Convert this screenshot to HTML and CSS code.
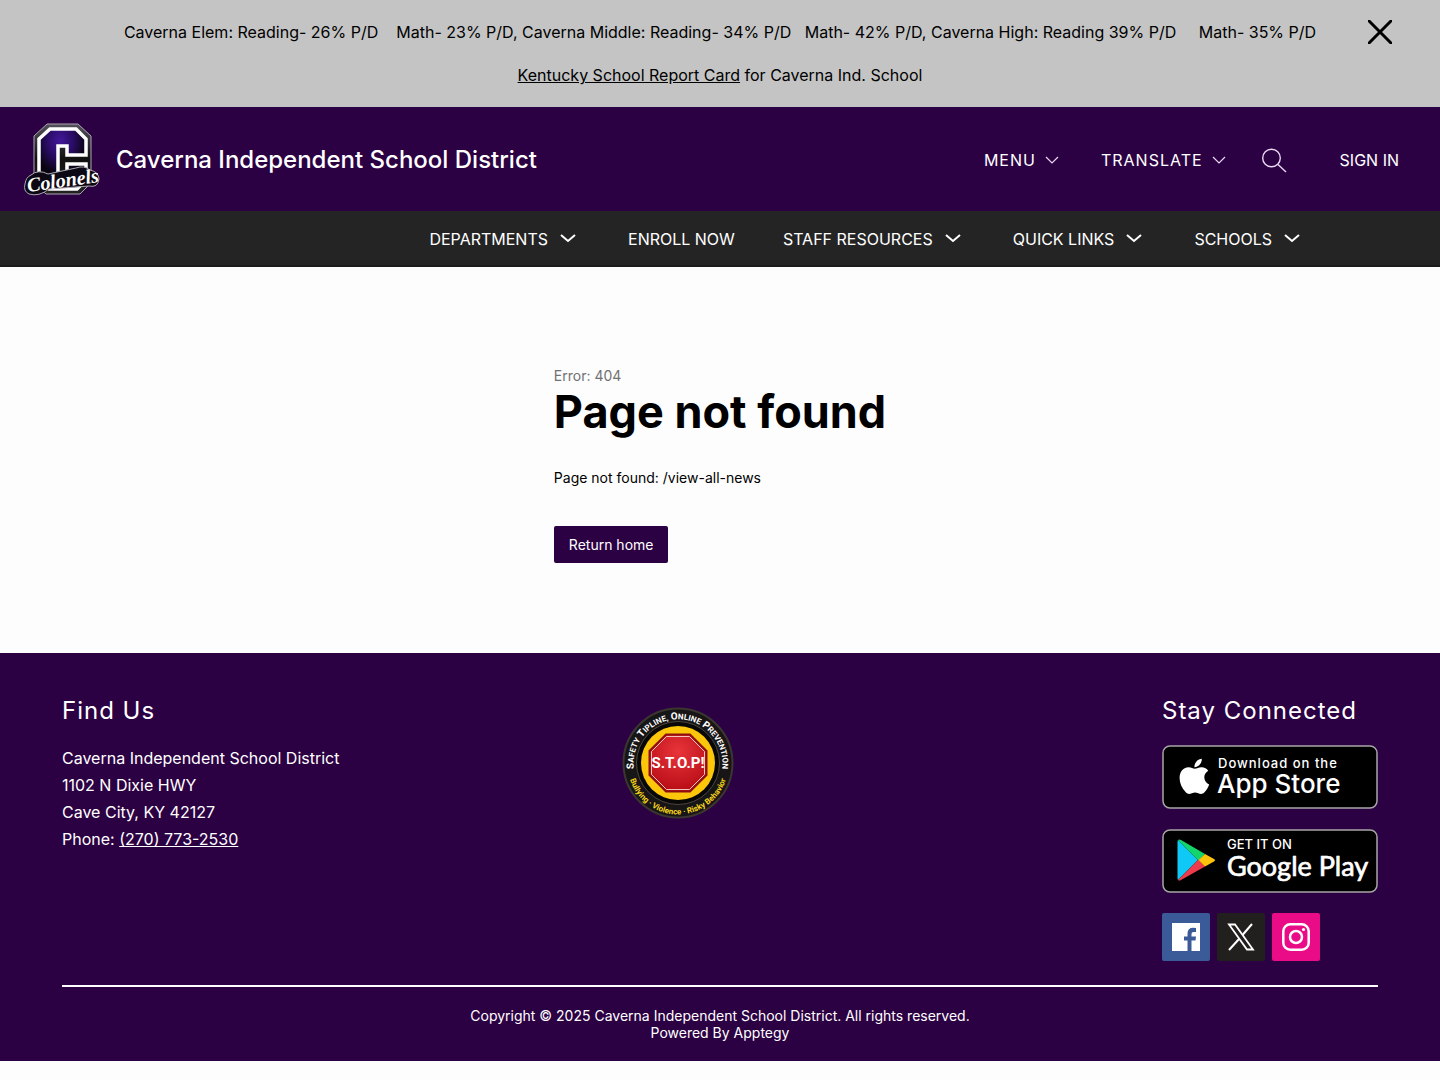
FILE: index.html
```html
<!DOCTYPE html>
<html lang="en">
<head>
<meta charset="utf-8">
<meta name="viewport" content="width=device-width, initial-scale=1">
<title>Caverna Independent School District</title>
<link rel="stylesheet" href="styles.css">
</head>
<body>
<section class="alert" aria-label="Announcement">
  <div class="alert-text">
    <p>Caverna Elem: Reading- 26% P/D&nbsp;&nbsp;&nbsp; Math- 23% P/D, Caverna Middle: Reading- 34% P/D&nbsp;&nbsp; Math- 42% P/D, Caverna High: Reading 39% P/D&nbsp;&nbsp;&nbsp;&nbsp; Math- 35% P/D</p>
    <p><a href="#">Kentucky School Report Card</a> for Caverna Ind. School</p>
  </div>
  <button class="alert-close" type="button" aria-label="Close announcement">
    <svg width="24" height="24" viewBox="0 0 24 24" fill="none" stroke="#000" stroke-width="3" stroke-linecap="round"><path d="M1 1 23 23M23 1 1 23"/></svg>
  </button>
</section>

<header class="header">
  <a class="brand" href="#">
    <svg class="logo" width="76" height="74" viewBox="0 0 76 74" role="img" aria-label="Colonels logo">
      <defs>
        <radialGradient id="letter" cx="45%" cy="20%" r="55%">
          <stop offset="0" stop-color="#42189a"/><stop offset="0.5" stop-color="#2a0c66"/><stop offset="1" stop-color="#09040f"/>
        </radialGradient>
        <linearGradient id="rim" x1="0" y1="0" x2="0" y2="1">
          <stop offset="0" stop-color="#54515c"/><stop offset="0.5" stop-color="#111"/><stop offset="1" stop-color="#222"/>
        </linearGradient>
      </defs>
      <path d="M23 1H54L67 13V60L56 71H22L10 60V13Z" fill="url(#rim)" stroke="#aaa6b0"/>
      <path d="M26 6H52L62 16V32H43V23H34V50H43V41H62V57L53 66H25L15 57V16Z" fill="url(#letter)" stroke="#fff" stroke-width="3.500"/>
      <path d="M7 52Q14 46 24 51L52 45Q60 42 66 47Q75 49 75 56Q74 65 65 63L25 66Q15 74 5 71Q-1 68 1 61Q2 54 7 52Z" fill="#0d0914" stroke="#aaa6b0"/>
      <text class="logo-script" x="4" y="69" transform="rotate(-8 4 69)">Colonels</text>
    </svg>
    <span class="brand-name">Caverna Independent School District</span>
  </a>
  <div class="tools">
    <button class="tool" type="button">MENU <svg width="14" height="8" viewBox="0 0 14 8"><path d="M1 1 7 7 13 1"/></svg></button>
    <button class="tool" type="button">TRANSLATE <svg width="14" height="8" viewBox="0 0 14 8"><path d="M1 1 7 7 13 1"/></svg></button>
    <button class="tool search" type="button" aria-label="Search"><svg width="25" height="26" viewBox="0 0 25 26"><circle cx="9.500" cy="11" r="8.800"/><path d="M16 17.500 24 25"/></svg></button>
    <a class="sign-in" href="#">SIGN IN</a>
  </div>
</header>

<nav class="nav" aria-label="Main">
  <button type="button">DEPARTMENTS <svg width="16" height="10" viewBox="0 0 16 10"><path d="M1 1 8 7 15 1"/></svg></button>
  <a href="#">ENROLL NOW</a>
  <button type="button">STAFF RESOURCES <svg width="16" height="10" viewBox="0 0 16 10"><path d="M1 1 8 7 15 1"/></svg></button>
  <button type="button">QUICK LINKS <svg width="16" height="10" viewBox="0 0 16 10"><path d="M1 1 8 7 15 1"/></svg></button>
  <button type="button">SCHOOLS <svg width="16" height="10" viewBox="0 0 16 10"><path d="M1 1 8 7 15 1"/></svg></button>
</nav>

<main class="main">
  <div class="error">
    <p class="error-code">Error: 404</p>
    <h1>Page not found</h1>
    <p class="error-detail">Page not found: /view-all-news</p>
    <a class="home" href="#">Return home</a>
  </div>
</main>

<footer class="footer">
  <div class="columns">
    <section>
      <h2>Find Us</h2>
      <address>Caverna Independent School District<br>1102 N Dixie HWY<br>Cave City, KY 42127<br>Phone: <a href="tel:2707732530">(270) 773-2530</a></address>
    </section>
    <a class="seal" href="#">
      <svg width="132" height="132" viewBox="0 0 132 132" role="img" aria-label="STOP tipline">
        <defs>
          <path id="arc-top" d="M23.500 80A44.500 44.500 0 1 1 108.500 80"/>
          <path id="arc-bottom" d="M15.500 67A50.500 50.500 0 0 0 116.500 67"/>
          <radialGradient id="sign" cx="50%" cy="30%" r="70%"><stop offset="0" stop-color="#e8343a"/><stop offset="1" stop-color="#b80d16"/></radialGradient>
        </defs>
        <circle cx="66" cy="66" r="54.500" fill="#171515" stroke="#3b3730" stroke-width="2"/>
        <circle cx="66" cy="66" r="41.500" fill="#080808" stroke="#4b463c"/>
        <circle cx="66" cy="66" r="37" fill="#fcc60a"/>
        <path d="M54 37.500H78L94.500 54V78L78 94.500H54L37.500 78V54Z" fill="url(#sign)" stroke="#8d1010" stroke-width="2"/>
        <path d="M54.500 39.500H77.500L92.500 54.500V77.500L77.500 92.500H54.500L39.500 77.500V54.500Z" fill="none" stroke="#f5c3bd"/>
        <text class="seal-stop" x="66" y="71" text-anchor="middle">S.T.O.P!</text>
        <text class="seal-top"><textPath href="#arc-top" startOffset="50%" text-anchor="middle">S<tspan class="cap">AFETY</tspan> T<tspan class="cap">IPLINE,</tspan> O<tspan class="cap">NLINE</tspan> P<tspan class="cap">REVENTION</tspan></textPath></text>
        <text class="seal-bottom"><textPath href="#arc-bottom" startOffset="50%" text-anchor="middle">Bullying · Violence · Risky Behavior</textPath></text>
      </svg>
    </a>
    <section class="connect">
      <h2>Stay Connected</h2>
      <a class="store" href="#" aria-label="Download on the App Store">
        <svg width="216" height="64" viewBox="0 0 216 64">
          <rect x="1" y="1" width="214" height="62" rx="7" fill="#000" stroke="#a6a6a6" stroke-width="1.500"/>
          <path transform="translate(9 8) scale(1.950)" fill="#fff" d="M17.050 20.280c-.98.950-2.050.8-3.080.350-1.090-.46-2.090-.48-3.240 0-1.440.62-2.200.44-3.060-.35C2.790 15.250 3.510 7.590 9.050 7.310c1.350.070 2.290.74 3.080.8 1.180-.24 2.310-.93 3.570-.84 1.510.12 2.650.72 3.400 1.800-3.120 1.870-2.380 5.980.48 7.130-.57 1.500-1.310 2.990-2.540 4.090zM12.030 7.250c-.15-2.230 1.660-4.070 3.740-4.250.29 2.580-2.340 4.500-3.740 4.250z"/>
          <text class="store-small spaced" x="56" y="23">Download on the</text>
          <text class="store-apple" x="55" y="48">App Store</text>
        </svg>
      </a>
      <a class="store" href="#" aria-label="Get it on Google Play">
        <svg width="216" height="64" viewBox="0 0 216 64">
          <rect x="1" y="1" width="214" height="62" rx="7" fill="#000" stroke="#a6a6a6" stroke-width="1.500"/>
          <path d="M16 11 36 31 16 51Q15.500 50 15.500 49V13Q15.500 12 16 11Z" fill="#10c8f5"/>
          <path d="M16 11Q17 10 19 11L43 25 36.500 31.500Z" fill="#12d66b"/>
          <path d="M16 51Q17 52 19 51L43 37.500 36.500 30.500Z" fill="#ee3b4b"/>
          <path d="M43 25 52 30Q54 31 52 32.500L43 37.500 36.500 31Z" fill="#fcc30c"/>
          <text class="store-small" x="65" y="20">GET IT ON</text>
          <text class="store-google" x="65" y="47">Google Play</text>
        </svg>
      </a>
      <div class="social">
        <a class="facebook" href="#" aria-label="Facebook"><svg width="28" height="28" viewBox="0 0 28 28"><path d="M0 0H28V28H19.500V17.500H23.500L24 13.500H19.500V11Q19.500 9 21.500 9H24V5Q15.500 3.500 15.500 10.500V13.500H12V17.500H15.500V28H0Z" fill="#fff"/></svg></a>
        <a class="x" href="#" aria-label="X"><svg width="28" height="28" viewBox="0 0 28 28" fill="none" stroke="#fff"><path d="M2 1.500H8L26 26.500H20Z" stroke-width="1.800"/><path d="M25 1 15.500 12M12 16 2 27" stroke-width="2"/></svg></a>
        <a class="instagram" href="#" aria-label="Instagram"><svg width="28" height="28" viewBox="0 0 28 28" fill="none" stroke="#fff" stroke-width="2.500"><rect x="1.300" y="1.300" width="25.400" height="25.400" rx="7"/><circle cx="14" cy="14" r="6"/><circle cx="21.500" cy="6.500" r="1.600" fill="#fff" stroke="none"/></svg></a>
      </div>
    </section>
  </div>
  <div class="legal">
    <p>Copyright © 2025 Caverna Independent School District. All rights reserved.</p>
    <p>Powered By <a href="#">Apptegy</a></p>
  </div>
</footer>
</body>
</html>
```

FILE: styles.css
```css
* { box-sizing: border-box; }
body { margin: 0; background: #fdfdfd; color: #000; font: 16px/24px Inter, "Liberation Sans", sans-serif; }
p, h1, h2 { margin: 0; }
a { color: inherit; text-decoration: none; }
button { padding: 0; border: 0; background: none; color: inherit; font: inherit; cursor: pointer; }
svg { display: block; flex: none; }

.alert { display: grid; grid-template-columns: 48px 1fr 48px; align-items: start; padding: 20px 36px; background: #c4c4c4; }
.alert-text { grid-column: 2; display: grid; gap: 19px; text-align: center; }
.alert-text a { text-decoration: underline; }
.alert-close { display: grid; place-items: center; height: 24px; }

.header { display: flex; justify-content: space-between; align-items: center; padding: 16px 41px 14px 24px; background: #2c0143; color: #fff; }
.brand { display: flex; align-items: center; gap: 16px; }
.brand-name { font-size: 24px; font-weight: 500; line-height: 32px; }
.logo-script { font: italic bold 20px "Liberation Serif", serif; fill: #fff; }
.tools { display: flex; align-items: center; }
.tool { display: flex; align-items: center; gap: 9px; margin-right: 42px; letter-spacing: 1px; }
.tool svg { fill: none; stroke: #e9d9f2; stroke-width: 1.2; }
.tool.search { margin: 0 53px 0 -6px; }
.tool.search svg { stroke-width: 1.4; }

.nav { display: flex; justify-content: flex-end; align-items: center; gap: 48px; min-height: 56px; padding: 2px 136px 0; background: #242424; border-bottom: 2px solid #1c1c1c; color: #fff; }
.nav button { display: flex; align-items: center; gap: 12px; padding-right: 4px; }
.nav svg { fill: none; stroke: #fff; stroke-width: 2; }

.main { display: flex; justify-content: center; padding: 98px 24px 90px; }
.error { display: flex; flex-direction: column; align-items: flex-start; font-size: 14px; }
.error-code { color: #717171; line-height: 22px; }
.error h1 { font-size: 45px; line-height: 50px; }
.error-detail { padding: 30px 0 37px; line-height: 22px; }
.home { padding: 8px 15px; border-radius: 2px; background: #2c0143; color: #fff; line-height: 21px; }

.footer { padding: 40px 62px 20px; background: #2c0143; color: #fff; }
.columns { display: grid; grid-template-columns: 1fr 1fr auto; padding-bottom: 24px; border-bottom: 2px solid #fff; }
.footer h2 { font-size: 24px; font-weight: 400; line-height: 36px; letter-spacing: 1px; }
address { padding-top: 16px; font-style: normal; line-height: 27px; }
address a { text-decoration: underline; }
.seal { justify-self: start; padding-top: 4px; }
.connect h2 { padding-bottom: 16px; }
.store { display: block; margin-bottom: 20px; }
.store text { fill: #fff; }
.store-small { font-size: 13px; font-weight: 500; }
.spaced { letter-spacing: 1px; }
.store-apple { font-size: 26px; font-weight: 500; }
.store-google { font: 27px Lato, sans-serif; stroke: #fff; stroke-width: 0.7; }
.social { display: flex; gap: 7px; }
.social a { display: grid; place-items: center; width: 48px; height: 48px; border-radius: 2px; }
.facebook { background: #3a5a98; }
.x { background: #221f1f; }
.instagram { background: #ea0b86; }
.seal-stop { font: bold 15px Roboto, sans-serif; fill: #fff; }
.seal-top { font: bold 10px Roboto, sans-serif; fill: #fff; }
.cap { font-size: 8px; }
.seal-bottom { font: bold 8px Roboto, sans-serif; fill: #f8d51b; }
.legal { padding-top: 20px; text-align: center; font-size: 14px; line-height: 17px; }
```
